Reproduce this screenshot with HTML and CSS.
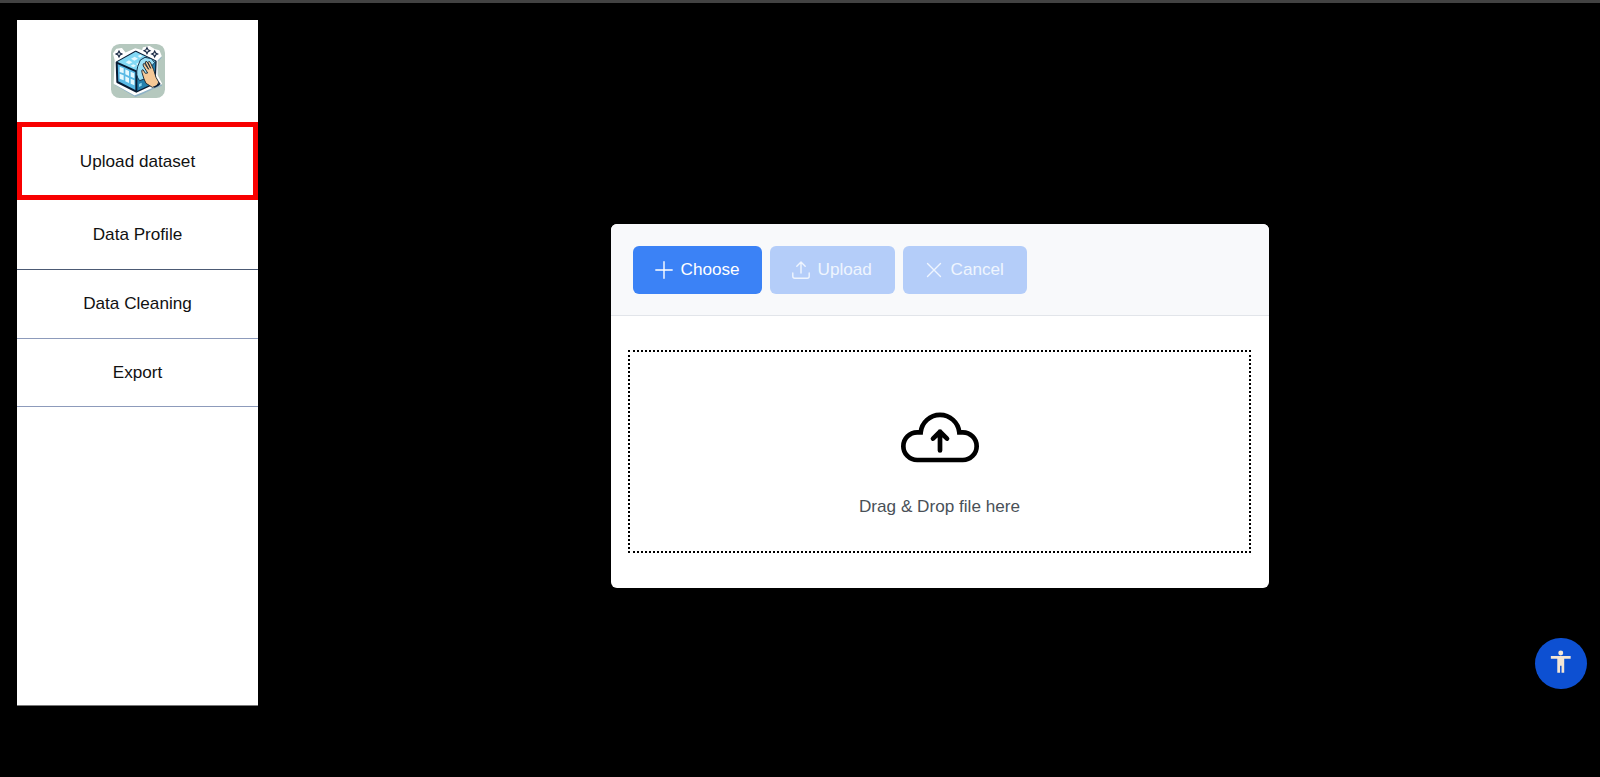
FILE: index.html
```html
<!DOCTYPE html>
<html lang="en">
<head>
<meta charset="utf-8">
<title>Upload dataset</title>
<link rel="stylesheet" href="styles.css">
</head>
<body>
<div class="page">
  <aside class="sidebar">
    <div class="brand">
      <svg class="logo" viewBox="33 30 162 162">
        <rect x="33" y="30" width="162" height="162" rx="26" fill="#b5c8be"/>
        <path d="M46 78L43 148L104 184L125 176L156 161L184 150L171 125V78L183 66L177 51L163 47L148 38L130 42L128 51L105 45L76 58L65 44L50 46L41 59Z" fill="#8fb2c6" transform="translate(2 5)"/>
        <path d="M46 78L43 148L104 182L125 174L156 160L184 149L171 125V78L183 66L177 51L163 47L148 38L130 42L128 51L105 45L76 58L65 44L50 46L41 59Z" fill="#fff" stroke="#fff" stroke-width="4" stroke-linejoin="round"/>
        <path d="M50 85L107 53L167 82L164 147L109 173L52 144Z" fill="#59b9e5" stroke="#081b33" stroke-width="6" stroke-linejoin="round"/>
        <path d="M50 85L107 53L167 82L109 112Z" fill="#83d9f5"/>
        <path d="M109 112L166 84L164 146L109 172Z" fill="#237fac"/>
        <path d="M50 86L109 112V172" fill="none" stroke="#081b33" stroke-width="6"/>
        <path d="M59 98l12 5v15l-12-4zM76 106l11 5v15l-11-5zM92 113l11 5v15l-11-5zM59 119l12 5v15l-12-5zM76 127l11 5v15l-11-5zM92 134l11 5v15l-11-5zM77 85l10-6 10 6-10 6zM93 74l11-6 10 6-11 6zM108 90l10-6 10 6-10 6zM92 95l8-4 8 4-8 5zM113 66l8-4 7 4-8 5z" fill="#e4f8fe"/>
        <path d="M113 98L121 78L135 70L154 74L164 86L149 102L136 134L119 140Q105 126 113 98Z" fill="#9be1f7" stroke="#14334e" stroke-width="3"/>
        <path d="M117 150l8-4v9l-8 4z" fill="#8dd6ef"/>
        <path d="M132 135L126 116Q123 107 129 107L136 118L143 117L130 96Q127 89 133 88L146 106L136 87Q136 80 141 83L152 103L144 85Q146 79 151 85L161 107L168 130L176 144Q173 157 157 160L138 148Z" fill="#f4c896" stroke="#25313c" stroke-width="3" stroke-linejoin="round"/>
        <path d="M160 158Q175 154 177 143L182 150Q174 159 164 161Z" fill="#081b33"/>
        <path d="M57 51l3 6 6 3-6 3-3 6-3-6-6-3 6-3zM141 41l3 6 6 3-6 3-3 6-3-6-6-3 6-3zM164 51l3 6 6 3-6 3-3 6-3-6-6-3 6-3z" fill="#e8edf0" stroke="#1c2b46" stroke-width="3.500"/>
      </svg>
    </div>
    <nav class="menu">
      <a class="item active">Upload dataset</a>
      <a class="item profile">Data Profile</a>
      <a class="item">Data Cleaning</a>
      <a class="item export">Export</a>
    </nav>
  </aside>
  <main class="content">
    <section class="card">
      <header class="toolbar">
        <button class="btn choose"><svg class="icon" viewBox="0 0 18 18"><path d="M9 .8v16.4M.8 9h16.4"/></svg><span>Choose</span></button>
        <button class="btn upload disabled"><svg class="icon" viewBox="0 0 18 18"><path d="M9 12V1.2M4.800 5.200L9 1l4.200 4.200M.8 12v3.200q0 2 2 2h12.400q2 0 2-2V12"/></svg><span>Upload</span></button>
        <button class="btn cancel disabled"><svg class="icon" viewBox="0 0 18 18"><path d="M2.500 2.500l13 13M15.500 2.500l-13 13"/></svg><span>Cancel</span></button>
      </header>
      <div class="body">
        <div class="dropzone">
          <svg class="cloud" viewBox="0 0 78 52"><path d="M16.200 49A13.850 13.850 0 0 1 16.200 21.300H19.700A19.400 19.400 0 0 1 58.300 21.300H61.800A13.850 13.850 0 0 1 61.800 49Z"/><path class="arrow" d="M39 39.500V20.700M32 27.600L39 20.800L46 27.600"/></svg>
          <p class="hint">Drag &amp; Drop file here</p>
        </div>
      </div>
    </section>
  </main>
  <button class="access" aria-label="Accessibility"><svg viewBox="0 0 52 52"><circle cx="26" cy="15.200" r="2.500"/><path d="M16 18.200h20v2.700h-6.500V35h-2.700v-7h-1.500v7h-2.800V20.900H16z"/></svg></button>
</div>
</body>
</html>
```
FILE: styles.css
```css
* { box-sizing: border-box; }
body {
  margin: 0;
  background: #000;
  font: 17.15px/20px "Liberation Sans", Arial, sans-serif;
  color: #111;
}
.page {
  display: flex;
  height: 777px;
  padding: 17px 0 70px 17px;
  border-top: 3px solid #424242;
}
.sidebar {
  width: 241px;
  height: 686px;
  background: #fff;
  border-bottom: 1px solid #777;
}
.brand {
  display: flex;
  justify-content: center;
  height: 102px;
  padding-top: 24px;
}
.logo { width: 54px; height: 54px; }
.menu { display: flex; flex-direction: column; }
.item {
  display: flex;
  align-items: center;
  justify-content: center;
  height: 69px;
  padding-bottom: 2px;
  border-bottom: 1px solid #8d9bbb;
}
.active { height: 78px; padding: 0; border: 5px solid #f80000; }
.profile { height: 70px; border-bottom-color: #4c5a74; }
.export { height: 68px; }
.content { flex: 1; padding: 204px 0 0 352.5px; }
.card {
  width: 658.5px;
  height: 364px;
  background: #fff;
  border-radius: 6px;
  overflow: hidden;
}
.toolbar {
  display: flex;
  gap: 8px;
  height: 92px;
  padding: 22px;
  background: #f8f9fb;
  border-bottom: 1px solid #e2e5ea;
}
.btn {
  display: flex;
  align-items: center;
  gap: 8px;
  height: 47.5px;
  padding: 0 0 0 22px;
  border: 0;
  border-radius: 6px;
  background: #3b82f6;
  color: #fff;
  font: inherit;
}
.btn span { padding-bottom: 2px; }
.disabled { background: #b4cdf9; color: #eff5fe; }
.choose { width: 129px; }
.upload { width: 125px; }
.cancel { width: 124px; }
.icon {
  width: 18px;
  height: 18px;
  fill: none;
  stroke: currentColor;
  stroke-width: 1.4;
  stroke-linecap: round;
  stroke-linejoin: round;
}
.body { padding: 34px 18px 0 17.5px; }
.dropzone {
  display: flex;
  flex-direction: column;
  align-items: center;
  height: 203px;
  padding-top: 59px;
  border: 2px dotted #000;
}
.cloud {
  width: 78px;
  height: 52px;
  fill: none;
  stroke: #000;
  stroke-width: 4.7;
}
.arrow { stroke-linecap: round; stroke-linejoin: round; }
.hint { margin: 33px 0 0; color: #495057; }
.access {
  position: absolute;
  right: 13.5px;
  top: 637.5px;
  width: 51.5px;
  height: 51.5px;
  padding: 0;
  border: 0;
  border-radius: 50%;
  background: #0d50d2;
}
.access svg { display: block; fill: #f4e6d4; }
```
